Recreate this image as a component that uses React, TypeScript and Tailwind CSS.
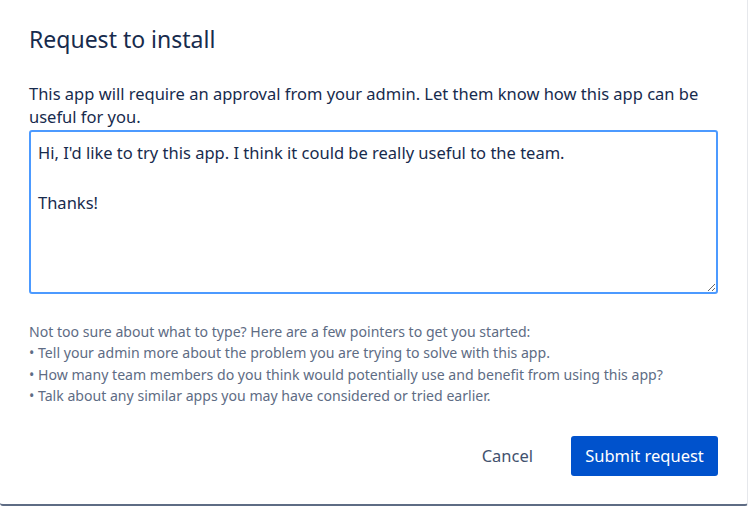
import { useState } from "react";

export default function App() {
  const [message, setMessage] = useState(
    "Hi, I'd like to try this app. I think it could be really useful to the team.\n\nThanks!"
  );

  return (
    <div className="h-[507px] w-[748px] bg-white" style={{ fontFamily: '"Noto Sans", "Open Sans", sans-serif' }}>
      <div className="flex h-[506px] w-[748px] flex-col rounded-b-[3px] border-b-2 border-r border-b-[#5e6c84] border-r-[#e6e8ec] bg-white pl-[29px] pr-[29px]">
        <h1 className="mt-[23px] text-[23px] leading-[32px] font-normal text-[#172b4d]">Request to install</h1>

        <p className="mt-[27px] text-[16.5px] leading-[23px] text-[#172b4d]">
          This app will require an approval from your admin. Let them know how this app can be useful for you.
        </p>

        <textarea
          value={message}
          onChange={(e) => setMessage(e.target.value)}
          className="mt-[2px] h-[164px] w-[689px] resize-y rounded-[3px] border-2 border-[#4c9aff] px-[7px] pt-[8px] pb-[6px] text-[16.5px] leading-[25px] text-[#172b4d] outline-none"
        />

        <div className="mt-[27px] text-[14.1px] leading-[21.3px] text-[#5e6c84]">
          <p>Not too sure about what to type? Here are a few pointers to get you started:</p>
          <p>• Tell your admin more about the problem you are trying to solve with this app.</p>
          <p>• How many team members do you think would potentially use and benefit from using this app?</p>
          <p>• Talk about any similar apps you may have considered or tried earlier.</p>
        </div>

        <div className="mt-[30px] flex items-center justify-end gap-[26px]">
          <button className="h-[40px] rounded-[3px] px-[12px] text-[16.5px] text-[#42526e]">Cancel</button>
          <button className="h-[40px] w-[147px] rounded-[3px] bg-[#0052cc] text-[16.5px] text-white">Submit request</button>
        </div>
      </div>
    </div>
  );
}
